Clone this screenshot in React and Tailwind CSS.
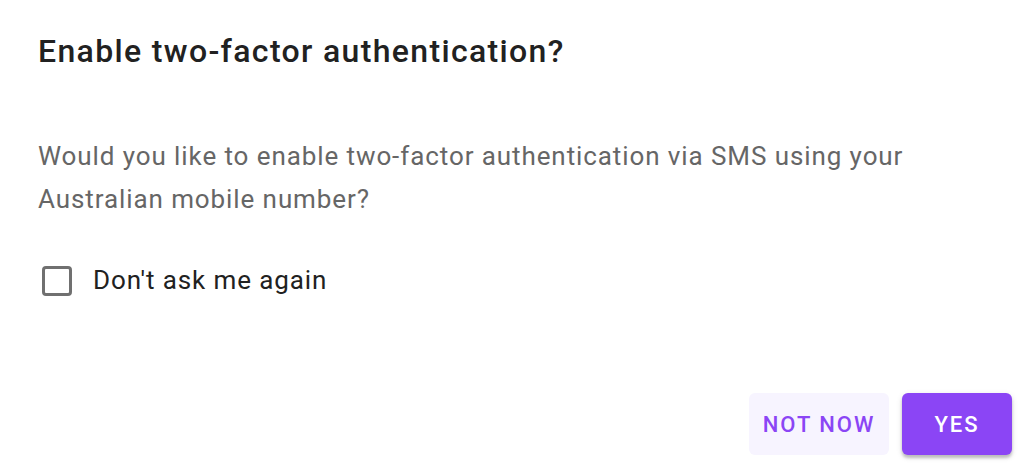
const App = () => {
    return (
        <div className="w-[1024px] h-[467px] bg-white flex flex-col font-['Roboto',sans-serif]">
            {/* Title */}
            <h2 className="pt-[26px] px-[38px] text-[32px] leading-[51px] font-medium tracking-[0.042em] text-[#212121]">
                Enable two-factor authentication?
            </h2>

            {/* Content */}
            <p className="mt-[58px] px-[38px] text-[26px] leading-[43px] tracking-[0.035em] text-[#666666]">
                Would you like to enable two-factor authentication via SMS using your Australian mobile number?
            </p>

            <label className="mt-[38px] px-[42px] flex items-center h-[43px] gap-[21px] text-[26px] tracking-[0.034em] text-[#212121]">
                <span className="w-[30px] h-[30px] border-[3px] border-[#707070] rounded-[4px] shrink-0" />
                Don't ask me again
            </label>

            {/* Actions */}
            <div className="mt-auto flex justify-end items-center gap-[13px] pr-[12px] pb-[12px]">
                <button className="w-[140px] h-[62px] rounded-[6px] bg-[#f7f4ff] text-[#8b45f5] text-[22px] font-medium uppercase tracking-[0.09em]">
                    Not now
                </button>
                <button className="w-[110px] h-[62px] rounded-[6px] bg-[#8b45f5] text-white text-[22px] font-medium uppercase tracking-[0.09em] shadow-[0_3px_3px_rgba(0,0,0,0.2),0_2px_6px_rgba(0,0,0,0.12)]">
                    Yes
                </button>
            </div>
        </div>
    );
};

export default App;
